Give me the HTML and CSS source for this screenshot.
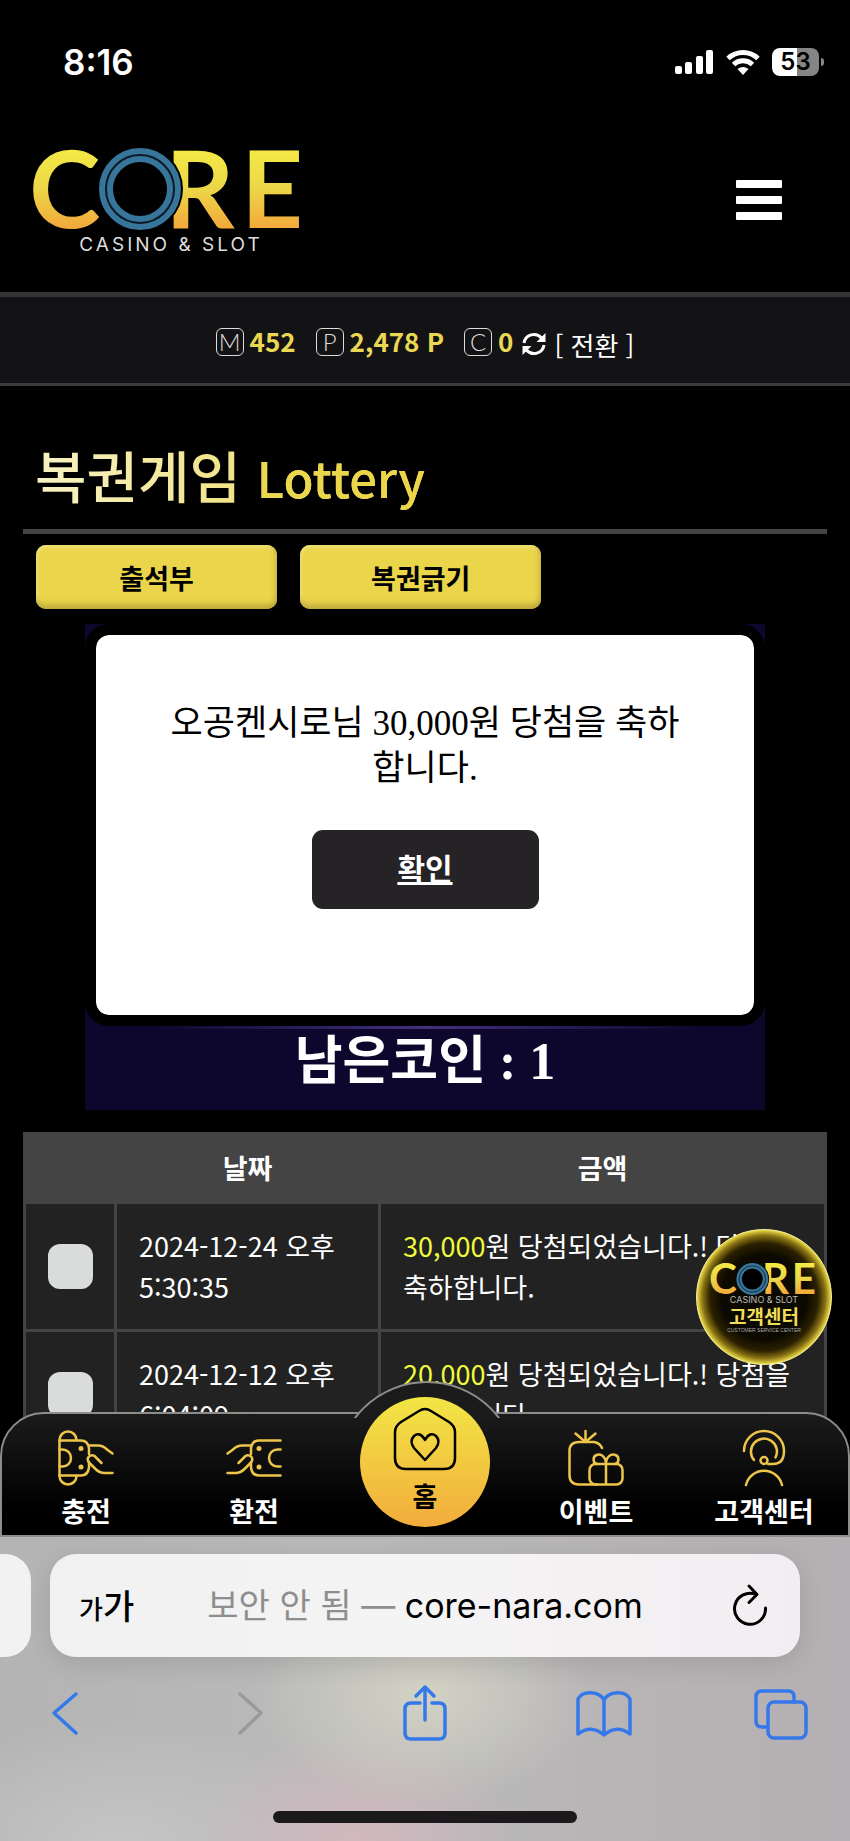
FILE: index.html
```html
<!DOCTYPE html>
<html lang="ko">
<head>
  <meta charset="UTF-8" />
  <meta name="viewport" content="width=device-width, initial-scale=1.0"/>
  <title>복권게임 | CORE</title>
  <link rel="stylesheet" href="styles.css">
</head>
<body>

<div class="page">

  <div class="status-bar">
    <span class="time">8:16</span>
    <div class="status-icons">
      <svg width="39" height="25" viewBox="0 0 39 25" fill="#fff">
        <rect x="0" y="16" width="7" height="8" rx="2"/>
        <rect x="10" y="12" width="7" height="12" rx="2"/>
        <rect x="21" y="6" width="7" height="18" rx="2"/>
        <rect x="31" y="0" width="7" height="24" rx="2"/>
      </svg>
      <svg width="34" height="25" viewBox="0 0 34 25" fill="none" stroke="#fff" stroke-width="5">
        <path d="M2 8.500a22 22 0 0 1 30 0"/>
        <path d="M7.500 14.500a14 14 0 0 1 19 0"/>
        <path d="M17 25l-5.500-6a9 9 0 0 1 11 0z" fill="#fff" stroke="none"/>
      </svg>
      <div class="battery"><span>53</span></div>
    </div>
  </div>

  <header class="header">
    <a href="#" class="logo" aria-label="CORE CASINO &amp; SLOT">
      <svg width="272" height="104" viewBox="0 0 272 104">
        <defs>
          <linearGradient id="gold" gradientUnits="userSpaceOnUse" x1="0" y1="0" x2="0" y2="80">
            <stop offset="0" stop-color="#f4ea45"/>
            <stop offset="0.5" stop-color="#ecd748"/>
            <stop offset="1" stop-color="#f2a93b"/>
          </linearGradient>
        </defs>
        <g id="core">
          <g class="logo-word" fill="url(#gold)">
            <text x="-5" y="80">C</text>
            <text x="131" y="80">R</text>
            <text x="207" y="80">E</text>
          </g>
          <circle cx="106" cy="41" r="43" fill="#000"/>
          <circle cx="106" cy="41" r="34" fill="none" stroke="#37759a" stroke-width="14"/>
          <circle cx="106" cy="41" r="34" fill="none" stroke="#0b1a24" stroke-width="2"/>
        </g>
        <text class="logo-sub" x="137" y="103" text-anchor="middle">CASINO &amp; SLOT</text>
      </svg>
    </a>
    <button class="menu-btn" aria-label="메뉴"><span></span><span></span><span></span></button>
  </header>

  <div class="wallet">
    <div class="wallet-item"><i>M</i><b>452</b></div>
    <div class="wallet-item"><i>P</i><b>2,478 P</b></div>
    <div class="wallet-item"><i>C</i><b>0</b></div>
    <a href="#" class="convert">
      <svg width="24" height="24" viewBox="0 0 24 24" fill="none" stroke="#fff" stroke-width="3">
        <path d="M2 11a10 10 0 0 1 17.500-5"/>
        <path d="M22 13a10 10 0 0 1-17.500 5"/>
        <path d="M23.500 1v9h-9zM.5 23v-9h9z" fill="#fff" stroke="none"/>
      </svg>
      [ 전환 ]
    </a>
  </div>

  <main class="content">
    <h1 class="title">복권게임 <small>Lottery</small></h1>

    <div class="tabs">
      <button>출석부</button>
      <button>복권긁기</button>
    </div>

    <div class="board">
      <p class="coins">남은코인 : 1</p>
      <div class="modal" role="dialog">
        <p>오공켄시로님 30,000원 당첨을 축하합니다.</p>
        <a href="#" class="confirm">확인</a>
      </div>
    </div>

    <table class="history">
      <colgroup><col class="col-check"><col class="col-date"><col></colgroup>
      <thead>
        <tr><th></th><th>날짜</th><th>금액</th></tr>
      </thead>
      <tbody>
        <tr>
          <td><input type="checkbox" aria-label="2024-12-24 선택"></td>
          <td>2024-12-24 오후 5:30:35</td>
          <td><em>30,000</em>원 당첨되었습니다.! 당첨을 축하합니다.</td>
        </tr>
        <tr>
          <td><input type="checkbox" aria-label="2024-12-12 선택"></td>
          <td>2024-12-12 오후 6:04:09</td>
          <td><em>20,000</em>원 당첨되었습니다.! 당첨을 축하합니다.</td>
        </tr>
      </tbody>
    </table>
  </main>

  <a href="#" class="support-badge">
    <svg width="106" height="32" viewBox="0 0 272 82"><use href="#core"/></svg>
    <span class="badge-sub">CASINO &amp; SLOT</span>
    <strong>고객센터</strong>
    <span class="badge-note">CUSTOMER SERVICE CENTER</span>
  </a>

  <nav class="bottom-nav">
    <a href="#">
      <svg class="nav-icon" viewBox="0 0 56 56">
        <path d="M1.500 10v36M1.500 10a8.500 8.500 0 0 1 17 0M18.500 46a8.500 8.500 0 0 1-17 0"/>
        <g id="cardHand">
          <path d="M1.500 10.500H23q7 0 8 8V24M1.500 45.500H23q7 0 8-8V32"/>
          <circle class="dot" cx="23" cy="18.500" r="2.500"/>
          <circle class="dot" cx="23" cy="37" r="2.500"/>
          <path d="M1.500 19.500h3a8.500 8.500 0 0 1 0 17h-3"/>
          <path d="M31 15.500h9q5 0 9 4l5.500 4M43.500 33l-7-7q-3-2-6 1-2 3 1 6l6 6q4 4 9 4h8"/>
        </g>
      </svg>
      <span>충전</span>
    </a>
    <a href="#">
      <svg class="nav-icon" viewBox="0 0 56 56"><g transform="matrix(-1 0 0 1 56 0)"><use href="#cardHand"/></g></svg>
      <span>환전</span>
    </a>
    <a href="#" class="home">
      <svg class="home-icon" viewBox="0 0 64 64">
        <path d="M26 4Q32 0 38 4l18 11q6 4 6 10v26q0 11-11 11H13Q2 62 2 51V25q0-6 6-10z"/>
        <path d="M32 53L21 41q-5-7 0-12 6-5 11 4 5-9 11-4 5 5 0 12z"/>
      </svg>
      <span>홈</span>
    </a>
    <a href="#">
      <svg class="nav-icon" viewBox="0 0 56 56">
        <path d="M17.500 12V1M17.500 12l-10-8.500M17.500 12l10-8.500"/>
        <path d="M34 18q-2-5-8-6H11q-9.500 0-9.500 9v24q0 9.500 9.500 9.500h18"/>
        <rect x="21.500" y="34" width="33" height="20.500" rx="6"/>
        <path d="M38 34v20M38 34c0-7-5-11-9.500-9s-3.500 9 1 9M38 34c0-7 5-11 9.500-9s3.500 9-1 9"/>
      </svg>
      <span>이벤트</span>
    </a>
    <a href="#">
      <svg class="nav-icon" viewBox="0 0 56 56">
        <path d="M8 21a20 20 0 0 1 40 0q0 13-11 13h-5"/>
        <path d="M18 30a13 13 0 1 1 21.500-2.500"/>
        <circle cx="28" cy="30.500" r="3.500"/>
        <path d="M10 55a18.500 18.500 0 0 1 36 0"/>
      </svg>
      <span>고객센터</span>
    </a>
  </nav>
</div>

<footer class="browser">
  <div class="url-row">
    <div class="prev-tab"></div>
    <div class="url-bar">
      <button class="text-size" aria-label="글자 크기"><small>가</small>가</button>
      <button class="address"><span>보안 안 됨 —</span> core-nara.com</button>
      <button class="reload" aria-label="새로고침">
        <svg width="36" height="44" viewBox="0 0 36 44" fill="none" stroke="#000" stroke-width="3" stroke-linecap="round" stroke-linejoin="round">
          <path d="M24 10.500A15.500 15.500 0 1 0 33.500 24"/>
          <path d="M17 2l8 8.500-8 8"/>
        </svg>
      </button>
    </div>
  </div>
  <div class="toolbar">
    <button aria-label="뒤로"><svg viewBox="0 0 56 56"><path d="M36 9L14 28l22 20"/></svg></button>
    <button aria-label="앞으로" disabled><svg viewBox="0 0 56 56"><path d="M21 9l21 19-21 20"/></svg></button>
    <button aria-label="공유"><svg viewBox="0 0 56 56"><path d="M23 18h-9q-6 0-6 6v24q0 6 6 6h28q6 0 6-6V24q0-6-6-6h-7M28 35V2M19 11l9-9 9 9"/></svg></button>
    <button aria-label="책갈피"><svg viewBox="0 0 56 56"><path d="M28 15C23 6 7 5 2 14v35q13-10 26 1 13-11 26-1V14C49 5 33 6 28 15zv35"/></svg></button>
    <button aria-label="탭"><svg viewBox="0 0 56 56"><rect x="14" y="17" width="38" height="36" rx="6"/><path d="M14 42H8q-6 0-6-6V12q0-6 6-6h26q6 0 6 6v5"/></svg></button>
  </div>
  <div class="home-indicator"></div>
</footer>

</body>
</html>
```
FILE: styles.css
```css
* {
  box-sizing: border-box;
  margin: 0;
  padding: 0;
}

body {
  display: flex;
  flex-direction: column;
  height: 100vh;
  background-color: #000;
  color: #fff;
  font-family: "Noto Sans CJK KR", sans-serif;
  font-size: 27px;
  line-height: 41px;
  overflow: hidden;
}

a {
  color: inherit;
  text-decoration: none;
}

button {
  border: none;
  background: none;
  font: inherit;
  color: inherit;
  cursor: pointer;
}

svg {
  display: block;
  overflow: visible;
}

.page {
  position: relative;
  flex: 1;
  min-height: 0;
  overflow: hidden;
}

/* status bar */
.status-bar {
  display: flex;
  justify-content: space-between;
  align-items: center;
  height: 124px;
  padding: 0 31px 0 63px;
  font-family: Inter, sans-serif;
}

.time {
  font-size: 35px;
  font-weight: 600;
}

.status-icons {
  display: flex;
  align-items: center;
  gap: 12px;
}

.battery {
  position: relative;
  width: 47px;
  height: 28px;
  border-radius: 8px;
  background: linear-gradient(to right, #fff 53%, #858585 53%);
  color: #000;
  font-size: 24px;
  font-weight: 600;
  line-height: 28px;
  text-align: center;
}

.battery::after {
  content: "";
  position: absolute;
  top: 10px;
  right: -5px;
  width: 3px;
  height: 8px;
  border-radius: 0 3px 3px 0;
  background-color: #858585;
}

/* header */
.header {
  display: flex;
  justify-content: space-between;
  align-items: center;
  padding: 24px 68px 40px 34px;
}

.logo-word {
  font-family: Lato, sans-serif;
  font-size: 108px;
  font-weight: 700;
}

.logo-sub {
  fill: #ddd;
  font-family: Inter, sans-serif;
  font-size: 19px;
  letter-spacing: 3px;
}

.menu-btn {
  display: flex;
  flex-direction: column;
  gap: 8px;
}

.menu-btn span {
  width: 46px;
  height: 8px;
  border-radius: 1px;
  background-color: #fff;
}

/* wallet */
.wallet {
  display: flex;
  justify-content: center;
  align-items: center;
  height: 94px;
  border-top: 5px solid #343436;
  border-bottom: 3px solid #3c3c3e;
  background-color: #131214;
  font-size: 26px;
}

.wallet-item {
  display: flex;
  align-items: center;
  gap: 6px;
  margin-right: 20px;
}

.wallet-item:nth-child(3) {
  margin-right: 9px;
}

.wallet-item i {
  width: 28px;
  height: 28px;
  margin-top: 4px;
  border: 1px solid #ddd;
  border-radius: 6px;
  color: #ddd;
  font-family: Lato, sans-serif;
  font-size: 24px;
  font-style: normal;
  font-weight: 300;
  line-height: 26px;
  text-align: center;
}

.wallet-item b {
  color: #ead752;
}

.convert {
  display: flex;
  align-items: center;
  gap: 8px;
  padding-top: 8px;
}

/* content */
.content {
  padding: 0 23px;
}

.title {
  padding: 50px 12px 14px;
  border-bottom: 5px solid #444;
  font-size: 56px;
  font-weight: 500;
  line-height: 76px;
}

.title,
.title small {
  background-image: linear-gradient(to right, #f8f3c8, #ead64f 400px);
  background-clip: text;
  -webkit-background-clip: text;
  color: transparent;
}

.title small {
  background-image: linear-gradient(to right, #ead84e, #ecd447);
  font-size: 49px;
}

.tabs {
  display: flex;
  gap: 23px;
  margin: 11px 0 15px;
  padding: 0 13px;
}

.tabs button {
  width: 31%;
  height: 64px;
  border-radius: 10px;
  background-color: #ead54b;
  box-shadow: inset 0 -8px 6px -4px #b9a53c, inset -5px 0 5px -3px #c9b443, inset 0 4px 4px -2px #f3e585, inset 4px 0 4px -3px #f3e585;
  color: #000;
  font-weight: 700;
}

.board {
  position: relative;
  display: flex;
  flex-direction: column;
  justify-content: flex-end;
  width: 80vw;
  height: 486px;
  margin: 0 auto 22px;
  padding-bottom: 17px;
  background: linear-gradient(to right, #0e072d, #43307e, #0e072d) no-repeat center 402px / 80% 3px, #0e072d;
  font-family: "Liberation Serif", "Noto Sans CJK KR", serif;
  text-align: center;
}

.coins {
  font-size: 52px;
  font-weight: 700;
  line-height: 62px;
}

.modal {
  position: absolute;
  top: 0;
  left: 0;
  right: 0;
  height: 402px;
  padding: 66px 64px 0;
  border: 11px solid #000;
  border-radius: 24px;
  background-color: #fff;
  background-clip: padding-box;
  color: #000;
}

.modal p {
  font-size: 35px;
  line-height: 45px;
}

.confirm {
  display: block;
  width: 227px;
  margin: 39px auto 0;
  border-radius: 11px;
  background-color: #252326;
  color: #fff;
  font-size: 30px;
  font-weight: 700;
  line-height: 79px;
  text-decoration: underline;
}

/* history table */
.history {
  width: 100%;
  border-collapse: collapse;
  table-layout: fixed;
  word-break: keep-all;
}

.col-check {
  width: 91px;
}

.col-date {
  width: 264px;
}

.history th,
.history td {
  border: 3px solid #444;
}

.history th {
  padding: 12px 22px 13px;
  background-color: #444;
  font-weight: 700;
}

.history td {
  padding: 21px 22px 22px;
  background-color: #222;
}

.history em {
  color: #f0fa3c;
  font-style: normal;
}

.history input {
  appearance: none;
  display: block;
  width: 45px;
  height: 45px;
  border-radius: 12px;
  background-color: #dadcdc;
}

/* floating support badge */
.support-badge {
  position: absolute;
  right: 18px;
  bottom: 172px;
  display: flex;
  flex-direction: column;
  align-items: center;
  width: 136px;
  height: 136px;
  padding-top: 33px;
  border: 1px solid #f6f0a0;
  border-radius: 50%;
  background: radial-gradient(circle, #0c0900 45%, #2b2100 57%, #8a7314 65%, #f0e04a 71%);
}

.badge-sub {
  color: #bbb;
  font-family: Inter, sans-serif;
  font-size: 9px;
  line-height: 10px;
}

.support-badge strong {
  color: #f0de58;
  font-size: 19px;
  line-height: 22px;
}

.badge-note {
  color: #aaa;
  font-family: "Liberation Sans", sans-serif;
  font-size: 5px;
  line-height: 6px;
}

/* bottom navigation */
.bottom-nav {
  position: absolute;
  left: 0;
  right: 0;
  bottom: 0;
  display: flex;
  height: 125px;
  padding-top: 16px;
  border: 2px solid #8d8d8b;
  border-radius: 44px 44px 0 0;
  background: linear-gradient(#1c1b1b, #000 80%);
  font-weight: 700;
}

/* bump around the home button */
.bottom-nav::before {
  content: "";
  position: absolute;
  top: -33px;
  left: 50%;
  width: 178px;
  height: 178px;
  margin-left: -89px;
  border: 2px solid #8d8d8b;
  border-radius: 50%;
  background-color: #1c1b1b;
  clip-path: inset(0 0 145px 0);
}

.bottom-nav a {
  position: relative;
  display: flex;
  flex: 1;
  flex-direction: column;
  align-items: center;
  gap: 4px;
}

.nav-icon {
  width: 56px;
  height: 56px;
  fill: none;
  stroke: #edc54a;
  stroke-width: 2.5;
  stroke-linecap: round;
  stroke-linejoin: round;
}

.nav-icon .dot {
  fill: #edc54a;
  stroke: none;
}

.bottom-nav .home {
  flex: none;
  width: 130px;
  height: 130px;
  margin: -33px 22px 0;
  padding-top: 10px;
  border-radius: 50%;
  background: linear-gradient(#f2e645, #f2ac3c);
  color: #000;
}

.home-icon {
  width: 64px;
  height: 64px;
  fill: none;
  stroke: #000;
  stroke-width: 2.5;
  stroke-linejoin: round;
}

/* browser chrome */
.browser {
  height: 304px;
  padding-top: 17px;
  background:
    radial-gradient(ellipse 170px 110px at 50% 52%, #d2d2c4, transparent),
    radial-gradient(ellipse 160px 110px at 42% 100%, #d2b8bf, transparent),
    radial-gradient(ellipse 240px 120px at 14% 100%, #c6c5c6, transparent),
    linear-gradient(to right, #b4b4b4, #bababa 40%, #b5b0b3);
}

.url-row {
  display: flex;
  gap: 19px;
  padding-right: 50px;
}

.prev-tab {
  width: 31px;
  border-radius: 0 26px 26px 0;
  background-color: #f2f2f2;
}

.url-bar {
  display: flex;
  flex: 1;
  align-items: center;
  height: 103px;
  padding: 0 32px 0 29px;
  border-radius: 26px;
  background: linear-gradient(to right, #f1f1f1, #f5f4f5 50%, #f2edf1);
  box-shadow: 0 6px 26px rgba(0, 0, 0, 0.12);
  color: #000;
}

.text-size {
  width: 63px;
  font-size: 34px;
  font-weight: 500;
  text-align: left;
}

.text-size small {
  font-size: 26px;
}

.address {
  flex: 1;
  font-family: Inter, "Noto Sans CJK KR", sans-serif;
  font-size: 34px;
}

.address span {
  color: #8e8e8e;
}

.reload {
  display: flex;
  justify-content: flex-end;
  width: 60px;
}

.toolbar {
  display: flex;
  justify-content: space-between;
  margin-top: 28px;
  padding: 0 40px;
}

.toolbar svg {
  width: 56px;
  height: 56px;
  fill: none;
  stroke: #3478ea;
  stroke-width: 3.5;
  stroke-linecap: round;
  stroke-linejoin: round;
}

.toolbar button:disabled svg {
  stroke: #9a9a9a;
}

.home-indicator {
  width: 304px;
  height: 12px;
  margin: 70px auto 0;
  border-radius: 6px;
  background-color: #1b191b;
}
```
